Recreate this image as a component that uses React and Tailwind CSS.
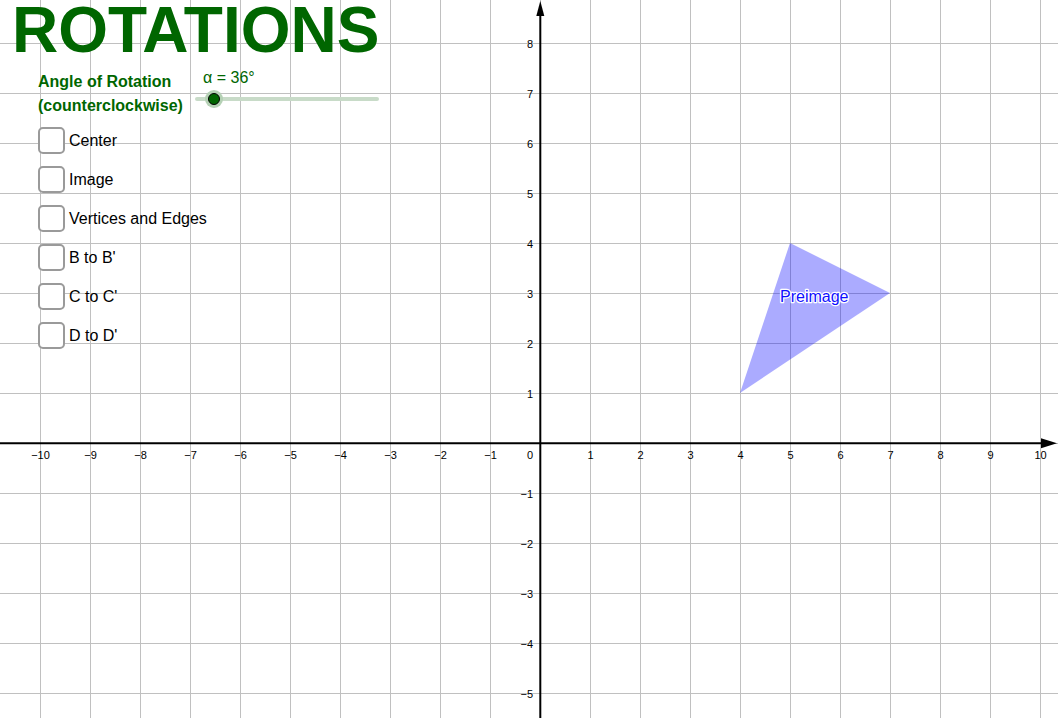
import React from "react";

const ORIGIN_X = 540;
const ORIGIN_Y = 443;
const U = 50;

function Graph() {
  const vx = [];
  for (let i = -10; i <= 10; i++) vx.push(ORIGIN_X + i * U);
  const hy = [];
  for (let j = -5; j <= 8; j++) hy.push(ORIGIN_Y - j * U);

  const fmt = (n) => (n < 0 ? "\u2212" + Math.abs(n) : String(n));

  const xLabels = [];
  for (let i = -10; i <= 10; i++) {
    if (i === 0) continue;
    xLabels.push(
      <text
        key={"x" + i}
        x={ORIGIN_X + i * U + 0.5}
        y={459}
        textAnchor="middle"
        fontSize="11"
        fill="#000"
      >
        {fmt(i)}
      </text>
    );
  }
  const yLabels = [];
  for (let j = -5; j <= 8; j++) {
    if (j === 0) continue;
    yLabels.push(
      <text
        key={"y" + j}
        x={533}
        y={ORIGIN_Y - j * U + 4.5}
        textAnchor="end"
        fontSize="11"
        fill="#000"
      >
        {fmt(j)}
      </text>
    );
  }

  const P = (x, y) => `${ORIGIN_X + x * U},${ORIGIN_Y - y * U}`;

  return (
    <svg
      width="1058"
      height="718"
      viewBox="0 0 1058 718"
      className="block"
      style={{ fontFamily: "'Liberation Sans', Arial, sans-serif" }}
    >
      <rect x="0" y="0" width="1058" height="718" fill="#ffffff" />
      {vx.map((x) => (
        <line key={"v" + x} x1={x + 0.5} y1="0" x2={x + 0.5} y2="718" stroke="#c0c0c0" strokeWidth="1" />
      ))}
      {hy.map((y) => (
        <line key={"h" + y} x1="0" y1={y + 0.5} x2="1058" y2={y + 0.5} stroke="#c0c0c0" strokeWidth="1" />
      ))}
      {/* axes */}
      <line x1="0" y1={443.3} x2="1046" y2={443.3} stroke="#000" strokeWidth="2" />
      <polygon points="1057,443.3 1041,438.3 1041,448.3" fill="#000" />
      <line x1={540.3} y1="14" x2={540.3} y2="718" stroke="#000" strokeWidth="2" />
      <polygon points="540.3,1 536.3,16 544.3,16" fill="#000" />
      {xLabels}
      {yLabels}
      <text x={533} y={459} textAnchor="end" fontSize="11" fill="#000">
        0
      </text>
      {/* preimage triangle */}
      <polygon points={`${P(4, 1)} ${P(5, 4)} ${P(7, 3)}`} fill="#0000ff" fillOpacity="0.33" />
      <text
        x={780}
        y={302}
        fontSize="16"
        fill="#0f0fff"
        stroke="#ffffff"
        strokeWidth="2.5"
        strokeLinejoin="round"
        style={{ paintOrder: "stroke" }}
      >
        Preimage
      </text>
    </svg>
  );
}

function Checkbox({ label }) {
  return (
    <div className="flex items-center h-[27px]">
      <div className="w-[27px] h-[27px] rounded-[5px] border-2 border-[#9a9a9a] bg-white shrink-0" />
      <span className="ml-[4px] mt-[1px] text-[16px] text-black whitespace-nowrap">{label}</span>
    </div>
  );
}

export default function App() {
  return (
    <div
      className="relative w-[1060px] h-[720px] bg-white overflow-hidden"
      style={{ fontFamily: "'Liberation Sans', Arial, sans-serif" }}
    >
      <Graph />

      {/* title */}
      <div className="absolute left-[12px] top-[2.3px] text-[64px] leading-[56px] font-bold text-[#006600] whitespace-nowrap">
        ROTATIONS
      </div>

      {/* angle label */}
      <div className="absolute left-[38px] top-[69.5px] text-[16px] leading-[24px] font-bold text-[#006600] whitespace-nowrap">
        <div>Angle of Rotation</div>
        <div>(counterclockwise)</div>
      </div>

      {/* slider */}
      <div className="absolute left-[203px] top-[68.5px] text-[16px] leading-[18px] text-[#006600] whitespace-nowrap">
        α = 36°
      </div>
      <div className="absolute left-[195px] top-[97px] w-[184px] h-[4px] rounded-full bg-[#c8dbc8]" />
      <div className="absolute left-[205px] top-[90px] w-[18px] h-[18px] rounded-full bg-[#b5d1b5] flex items-center justify-center">
        <div className="w-[12px] h-[12px] rounded-full bg-[#006600] border border-black" />
      </div>

      {/* checkboxes */}
      <div className="absolute left-[38px] top-[126.8px] flex flex-col gap-[12px]">
        <Checkbox label="Center" />
        <Checkbox label="Image" />
        <Checkbox label="Vertices and Edges" />
        <Checkbox label="B to B'" />
        <Checkbox label="C to C'" />
        <Checkbox label="D to D'" />
      </div>
    </div>
  );
}
